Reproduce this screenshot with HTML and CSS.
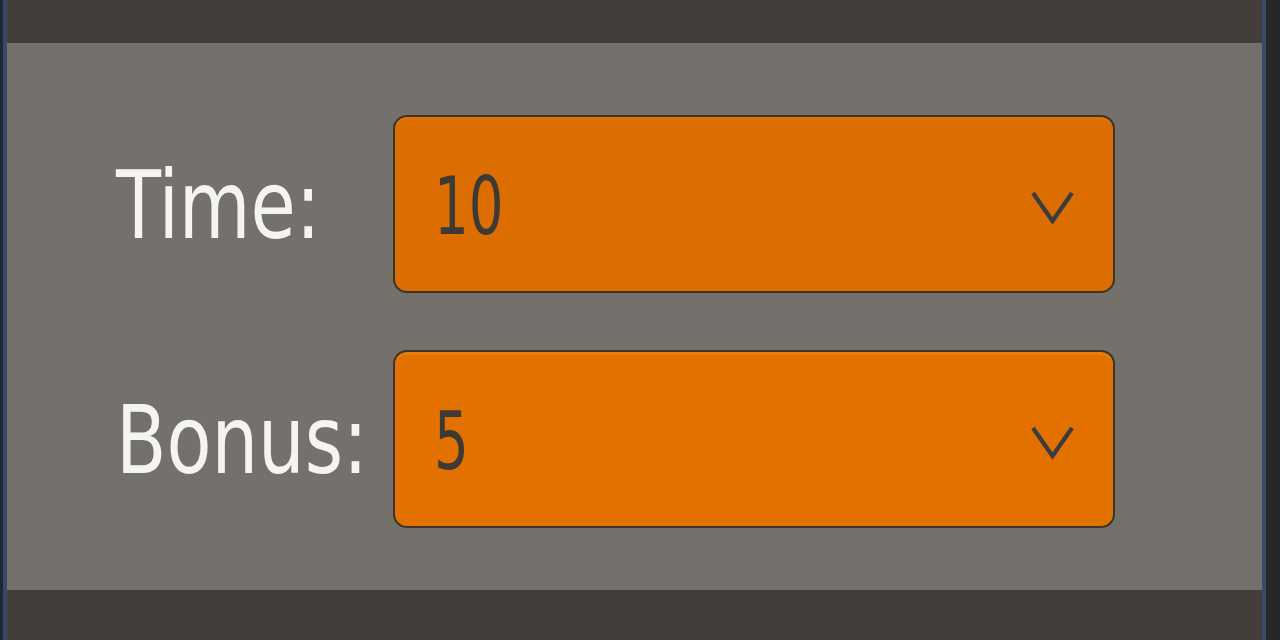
FILE: index.html
```html
<!DOCTYPE html>
<html lang="en">
<head>
<meta charset="utf-8">
<title>Time settings</title>
<link rel="stylesheet" href="styles.css">
</head>
<body>
<div class="frame">
  <div class="edge-left"></div>
  <div class="main">
    <div class="bar bar-top"></div>
    <div class="panel">
      <div class="form">
        <div class="label"><span class="txt">Time:</span></div>
        <div class="select select-a">
          <span class="value"><span class="txt">10</span></span>
          <svg class="chev" width="45" height="38" viewBox="0 0 45 38"><polyline points="3,4 22.5,32 42,4" fill="none" stroke="#3b3b40" stroke-width="4.2" stroke-linejoin="miter"/></svg>
        </div>
        <div class="label"><span class="txt">Bonus:</span></div>
        <div class="select select-b">
          <span class="value"><span class="txt">5</span></span>
          <svg class="chev" width="45" height="38" viewBox="0 0 45 38"><polyline points="3,4 22.5,32 42,4" fill="none" stroke="#3b3b40" stroke-width="4.2" stroke-linejoin="miter"/></svg>
        </div>
      </div>
    </div>
    <div class="bar bar-bottom"></div>
  </div>
  <div class="edge-right"></div>
</div>
</body>
</html>
```
FILE: styles.css
```css
html, body {
  margin: 0;
  padding: 0;
  height: 100%;
  background: #272727;
}
.frame {
  display: flex;
  width: 1280px;
  height: 640px;
  font-family: "DejaVu Sans", sans-serif;
  font-stretch: condensed;
}
.edge-left {
  width: 3px;
  background: #23262d;
  border-right: 4px solid #35486a;
}
.edge-right {
  width: 14px;
  background: #272727;
  border-left: 4px solid #394b6b;
}
.main {
  flex: 1;
  display: flex;
  flex-direction: column;
}
.bar {
  background: #433e3b;
}
.bar-top { height: 43px; }
.bar-bottom { flex: 1; }
.panel {
  height: 547px;
  background: #74706c;
  box-sizing: border-box;
  padding: 72px 0 0 109px;
}
.form {
  display: grid;
  grid-template-columns: 277px 722px;
  grid-auto-rows: 178px;
  row-gap: 57px;
  align-items: center;
}
.txt {
  display: inline-block;
  transform: scaleX(0.87);
  transform-origin: left center;
  white-space: nowrap;
}
.label {
  color: #f4f4f2;
  font-size: 94px;
  line-height: 1;
  padding-top: 4px;
}
.select {
  height: 178px;
  box-sizing: border-box;
  border: 2px solid #3e3428;
  border-radius: 14px;
  display: flex;
  align-items: center;
  justify-content: space-between;
  padding: 0 38px 0 39px;
}
.select-a {
  background: #dc6d00;
  box-shadow: inset 0 3px 0 #e07406;
}
.select-b {
  background: #e27100;
  box-shadow: inset 0 3px 0 #ea7c0e;
}
.value {
  color: #3d3935;
  font-size: 80px;
  line-height: 1;
  padding-top: 6px;
}
.value .txt {
  transform: scaleX(0.76);
}
.chev {
  display: block;
  margin-top: 8px;
}
```
